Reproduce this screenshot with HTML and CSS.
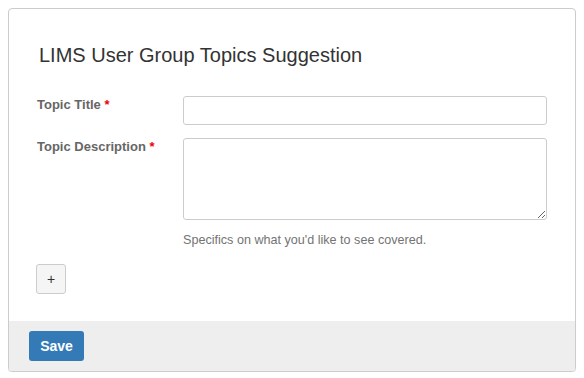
FILE: index.html
```html
<!DOCTYPE html>
<html lang="en">
<head>
    <meta charset="UTF-8">
    <meta name="viewport" content="width=device-width, initial-scale=1.0">
    <title>LIMS User Group Topics Suggestion</title>
    <link rel="stylesheet" href="styles.css">
</head>
<body>
    <div class="card">
        <form id="topicForm">
            <div class="card-body">
                <h2>LIMS User Group Topics Suggestion</h2>

                <!-- Titulo -->
                <div class="form-row">
                    <label for="topic_title">Topic Title <span class="req">*</span></label>
                    <div class="field">
                        <input type="text" id="topic_title" name="topic_title">
                    </div>
                </div>

                <!-- Descricao -->
                <div class="form-row">
                    <label for="topic_description">Topic Description <span class="req">*</span></label>
                    <div class="field">
                        <textarea id="topic_description" name="topic_description"></textarea>
                        <p class="help">Specifics on what you'd like to see covered.</p>
                    </div>
                </div>

                <button type="button" class="add">+</button>
            </div>

            <div class="card-footer">
                <button type="submit" class="save">Save</button>
            </div>
        </form>
    </div>
</body>
</html>
```

FILE: styles.css
```css
body {
    margin: 8px;
    font-family: "Liberation Sans", Arial, sans-serif;
    background-color: #fff;
    color: #333;
}
.card {
    width: 568px;
    box-sizing: border-box;
    border: 1px solid #ccc;
    border-radius: 4px;
    box-shadow: 0 1px 1px rgba(0, 0, 0, 0.08);
    overflow: hidden;
}
.card-body {
    padding: 35px 28px 27px 28px;
}
h2 {
    margin: 0 0 30px 2px;
    font-size: 20px;
    font-weight: normal;
    line-height: 22px;
    color: #333;
}
.form-row {
    display: flex;
    align-items: flex-start;
    margin-bottom: 13px;
}
.form-row label {
    width: 146px;
    flex-shrink: 0;
    font-size: 13px;
    font-weight: bold;
    line-height: 18px;
    color: #666;
}
.req {
    color: #e00;
}
.field {
    flex: 1;
}
input, textarea {
    display: block;
    width: 100%;
    box-sizing: border-box;
    border: 1px solid #ccc;
    border-radius: 3px;
    padding: 6px 10px;
    font-family: inherit;
    font-size: 13px;
}
input {
    height: 29px;
}
textarea {
    height: 82px;
    resize: vertical;
}
.help {
    margin: 12px 0 0 0;
    font-size: 12.6px;
    line-height: 16px;
    color: #737373;
}
.add {
    display: block;
    width: 30px;
    height: 30px;
    margin: 16px 0 0 -1px;
    padding: 0;
    border: 1px solid #ccc;
    border-radius: 3px;
    background-color: #f5f5f5;
    color: #333;
    font-family: inherit;
    font-size: 14px;
    cursor: pointer;
}
.card-footer {
    background-color: #eee;
    padding: 10px 20px;
}
.save {
    display: block;
    width: 55px;
    height: 30px;
    padding: 0;
    border: none;
    border-radius: 3px;
    background-color: #337ab7;
    color: white;
    font-family: inherit;
    font-size: 14px;
    font-weight: bold;
    cursor: pointer;
}
```
